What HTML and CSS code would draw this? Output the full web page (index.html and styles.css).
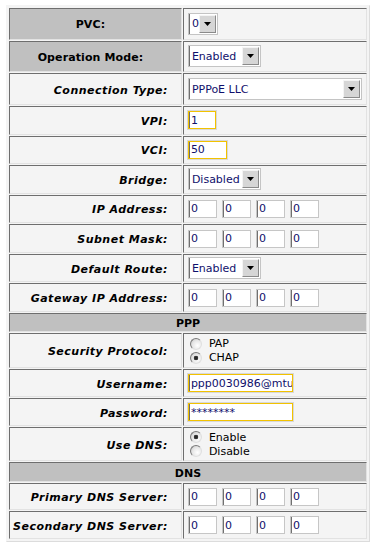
FILE: index.html
```html
<!DOCTYPE html>
<html lang="en">
<head>
  <meta charset="UTF-8" />
  <title>WAN Setup</title>
  <link rel="stylesheet" href="styles.css">
</head>
<body>
  <table class="config">
    <tr class="row-select">
      <th class="label label-dark">PVC:</th>
      <td class="value">
        <span class="select select-pvc">
          <select><option>0</option></select>
          <span class="select-btn"><svg width="7" height="4" viewBox="0 0 7 4"><path d="M0 0h7L3.5 4z"/></svg></span>
        </span>
      </td>
    </tr>
    <tr class="row-select">
      <th class="label label-dark">Operation Mode:</th>
      <td class="value">
        <span class="select select-mode">
          <select><option>Enabled</option></select>
          <span class="select-btn"><svg width="7" height="4" viewBox="0 0 7 4"><path d="M0 0h7L3.5 4z"/></svg></span>
        </span>
      </td>
    </tr>
    <tr class="row-select">
      <th class="label">Connection Type:</th>
      <td class="value">
        <span class="select select-wide">
          <select><option>PPPoE LLC</option></select>
          <span class="select-btn"><svg width="7" height="4" viewBox="0 0 7 4"><path d="M0 0h7L3.5 4z"/></svg></span>
        </span>
      </td>
    </tr>
    <tr>
      <th class="label">VPI:</th>
      <td class="value"><input class="field field-req field-vpi" type="text" value="1"></td>
    </tr>
    <tr>
      <th class="label">VCI:</th>
      <td class="value"><input class="field field-req field-vci" type="text" value="50"></td>
    </tr>
    <tr>
      <th class="label">Bridge:</th>
      <td class="value">
        <span class="select select-mode">
          <select><option>Disabled</option></select>
          <span class="select-btn"><svg width="7" height="4" viewBox="0 0 7 4"><path d="M0 0h7L3.5 4z"/></svg></span>
        </span>
      </td>
    </tr>
    <tr>
      <th class="label">IP Address:</th>
      <td class="value">
        <div class="ip">
          <input class="field field-ip" type="text" value="0">
          <input class="field field-ip" type="text" value="0">
          <input class="field field-ip" type="text" value="0">
          <input class="field field-ip" type="text" value="0">
        </div>
      </td>
    </tr>
    <tr>
      <th class="label">Subnet Mask:</th>
      <td class="value">
        <div class="ip">
          <input class="field field-ip" type="text" value="0">
          <input class="field field-ip" type="text" value="0">
          <input class="field field-ip" type="text" value="0">
          <input class="field field-ip" type="text" value="0">
        </div>
      </td>
    </tr>
    <tr>
      <th class="label">Default Route:</th>
      <td class="value">
        <span class="select select-mode">
          <select><option>Enabled</option></select>
          <span class="select-btn"><svg width="7" height="4" viewBox="0 0 7 4"><path d="M0 0h7L3.5 4z"/></svg></span>
        </span>
      </td>
    </tr>
    <tr>
      <th class="label">Gateway IP Address:</th>
      <td class="value">
        <div class="ip">
          <input class="field field-ip" type="text" value="0">
          <input class="field field-ip" type="text" value="0">
          <input class="field field-ip" type="text" value="0">
          <input class="field field-ip" type="text" value="0">
        </div>
      </td>
    </tr>

    <tr class="row-section">
      <th class="section" colspan="2">PPP</th>
    </tr>
    <tr class="row-radio">
      <th class="label">Security Protocol:</th>
      <td class="value">
        <label class="radio"><input type="radio" name="auth"> PAP</label>
        <label class="radio"><input type="radio" name="auth" checked> CHAP</label>
      </td>
    </tr>
    <tr>
      <th class="label">Username:</th>
      <td class="value"><input class="field field-req field-long" type="text" value="ppp0030986@mtu"></td>
    </tr>
    <tr class="row-short">
      <th class="label">Password:</th>
      <td class="value"><input class="field field-req field-long" type="text" value="********"></td>
    </tr>
    <tr class="row-radio">
      <th class="label">Use DNS:</th>
      <td class="value">
        <label class="radio"><input type="radio" name="dns" checked> Enable</label>
        <label class="radio"><input type="radio" name="dns"> Disable</label>
      </td>
    </tr>

    <tr class="row-section">
      <th class="section" colspan="2">DNS</th>
    </tr>
    <tr class="row-short">
      <th class="label">Primary DNS Server:</th>
      <td class="value">
        <div class="ip">
          <input class="field field-ip" type="text" value="0">
          <input class="field field-ip" type="text" value="0">
          <input class="field field-ip" type="text" value="0">
          <input class="field field-ip" type="text" value="0">
        </div>
      </td>
    </tr>
    <tr class="row-short">
      <th class="label">Secondary DNS Server:</th>
      <td class="value">
        <div class="ip">
          <input class="field field-ip" type="text" value="0">
          <input class="field field-ip" type="text" value="0">
          <input class="field field-ip" type="text" value="0">
          <input class="field field-ip" type="text" value="0">
        </div>
      </td>
    </tr>
  </table>
</body>
</html>
```

FILE: styles.css
```css
body {
  margin: 0;
  background: #fff;
  font-family: Verdana, "DejaVu Sans", sans-serif;
  font-size: 11px;
  color: #000;
}

.config {
  margin: 5px 0 0 6px;
  width: 364px;
  padding: 1px;
  border: 1px solid;
  border-color: #f4f4f4 #dcdcdc #dcdcdc #f4f4f4;
  border-spacing: 1px;
  background: #f4f4f4;
}

.config th,
.config td {
  box-sizing: border-box;
  height: 28.57px;
  padding: 0 4px;
  border: 1px solid;
  border-color: #6e6e6e #e2e2e2 #e2e2e2 #6e6e6e;
  vertical-align: middle;
  text-align: left;
}

.config .row-select th,
.config .row-select td {
  height: 31.67px;
}

.config .row-short th,
.config .row-short td {
  height: 27.5px;
}

.config .row-section th {
  height: 19.5px;
}

.config .row-radio th,
.config .row-radio td {
  height: 34.5px;
}

.config th.label {
  width: 172px;
  padding: 2px 13px 0 3px;
  text-align: right;
  font-weight: bold;
  font-style: italic;
  letter-spacing: 0.5px;
  white-space: nowrap;
}

.config th.label-dark {
  background: #c0c0c0;
  text-align: center;
  font-style: normal;
  letter-spacing: 0.1px;
}

.config th.section {
  background: #c0c0c0;
  text-align: center;
  padding: 2px 0 0;
}

/* fake windows-classic select */
.select {
  display: inline-flex;
  box-sizing: border-box;
  height: 22px;
  border: 1px solid #c4c4c4;
  background: #fff;
  vertical-align: middle;
}

.select select {
  flex: 1;
  min-width: 0;
  appearance: none;
  -webkit-appearance: none;
  margin: 0;
  padding: 0 0 0 2px;
  border: 0;
  border-left: 1px solid #707070;
  background: #fff;
  font: 11px Verdana, "DejaVu Sans", sans-serif;
  color: #10106b;
  outline: none;
}

.select-btn {
  display: flex;
  align-items: center;
  justify-content: center;
  box-sizing: border-box;
  width: 17px;
  margin: 1px 1px 1px 0;
  background: #d6d6d6;
  border: 1px solid;
  border-color: #f4f4f4 #8a8a8a #8a8a8a #f4f4f4;
}

.select-pvc { width: 30px; }
.select-mode { width: 73px; }
.select-wide { width: 174px; }

.field {
  box-sizing: border-box;
  height: 18px;
  margin: 0;
  padding: 0 0 0 2px;
  border: 1px solid #c6c6c6;
  box-shadow: inset 1px 0 0 #707070;
  background: #fff;
  font: 11px Verdana, "DejaVu Sans", sans-serif;
  color: #10106b;
  vertical-align: middle;
  outline: none;
}

.field-req {
  border-color: #f2c200;
  box-shadow: inset 1px 0 0 #707070, 0 0 0 1px #d8d8d8;
}

.field-vpi { width: 28px; }
.field-vci { width: 39px; }
.field-long { width: 105px; }
.field-ip { width: 29px; }

.ip {
  display: flex;
  gap: 5px;
}

.radio {
  display: flex;
  align-items: center;
  height: 14px;
  color: #000;
}

.radio input {
  appearance: none;
  -webkit-appearance: none;
  box-sizing: border-box;
  width: 12px;
  height: 12px;
  margin: 0 7px 0 2px;
  border: 1px solid;
  border-color: #7a7a7a #e0e0e0 #e0e0e0 #7a7a7a;
  border-radius: 50%;
  background: radial-gradient(circle at 65% 65%, #fff 0, #e6e6e6 55%, #bdbdbd 100%);
}

.radio input:checked {
  background: radial-gradient(circle, #1e1e1e 0, #3a3a3a 2px, transparent 2.6px),
    radial-gradient(circle at 65% 65%, #fff 0, #e6e6e6 55%, #bdbdbd 100%);
}
```
